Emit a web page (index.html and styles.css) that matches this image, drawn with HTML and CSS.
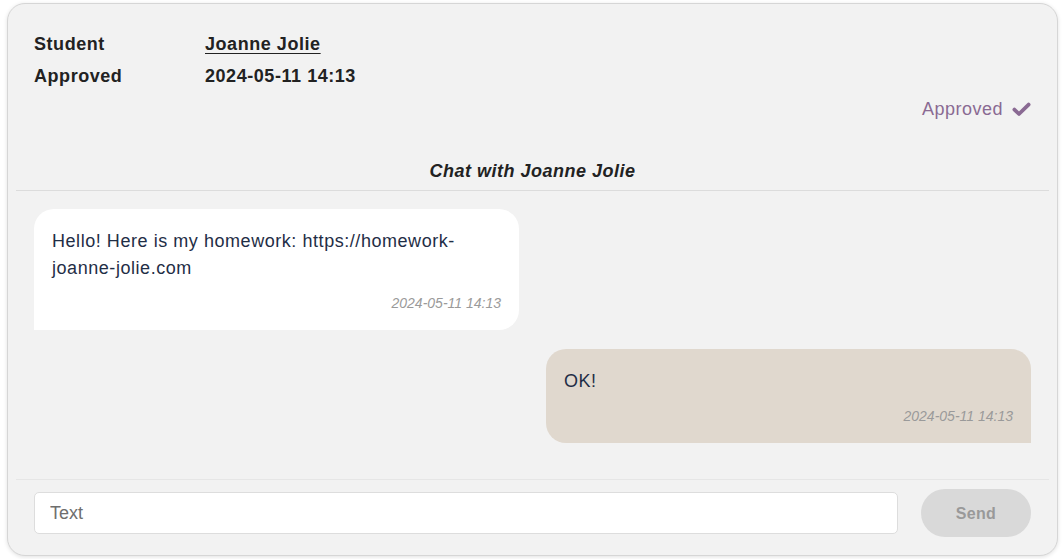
FILE: index.html
```html
<!DOCTYPE html>
<html lang="en">
<head>
<meta charset="utf-8">
<title>Homework chat</title>
<link rel="stylesheet" href="styles.css">
</head>
<body>
<div class="card">
  <section class="info">
    <div class="info-grid">
      <div class="label">Student</div>
      <div class="value"><a class="student-link" href="#">Joanne Jolie</a></div>
      <div class="label">Approved</div>
      <div class="value">2024-05-11 14:13</div>
    </div>
    <div class="status">
      <span>Approved</span>
      <svg class="check" viewBox="0 0 19 15" width="19" height="15" aria-hidden="true">
        <path d="M2.4 7.6 L7 12 L16.6 2.6" fill="none" stroke="currentColor" stroke-width="3.8" stroke-linecap="round" stroke-linejoin="round"/>
      </svg>
    </div>
  </section>
  <h2 class="chat-title">Chat with Joanne Jolie</h2>
  <section class="messages">
    <div class="bubble incoming">
      <p class="msg-text">Hello! Here is my homework: https://homework-joanne-jolie.com</p>
      <div class="msg-time">2024-05-11 14:13</div>
    </div>
    <div class="bubble outgoing">
      <p class="msg-text">OK!</p>
      <div class="msg-time">2024-05-11 14:13</div>
    </div>
  </section>
  <form class="composer" onsubmit="return false">
    <input class="composer-input" type="text" placeholder="Text">
    <button class="send-btn" type="submit" disabled>Send</button>
  </form>
</div>
</body>
</html>
```

FILE: styles.css
```css
* { box-sizing: border-box; }

html, body {
  margin: 0;
  padding: 0;
  background: #ffffff;
}

body {
  font-family: "Liberation Sans", Arial, sans-serif;
  color: #222222;
  padding: 3px 4px 3px 7px;
}

.card {
  background: #f2f2f2;
  border: 1px solid #d6d6d6;
  border-radius: 18px;
  box-shadow: 0 1px 4px rgba(0, 0, 0, 0.12);
  padding: 0 8px;
  height: 553px;
  display: flex;
  flex-direction: column;
}

.info {
  padding: 24px 18px 0;
}

.info-grid {
  display: grid;
  grid-template-columns: 171px auto;
  font-size: 18px;
  font-weight: bold;
  letter-spacing: 0.55px;
  line-height: 32px;
  color: #222222;
}

.student-link {
  color: #222222;
  text-decoration: underline;
  text-underline-offset: 3px;
}

.status {
  margin-top: 4px;
  display: flex;
  justify-content: flex-end;
  align-items: center;
  gap: 9px;
  line-height: 26px;
  font-size: 18px;
  letter-spacing: 0.5px;
  color: #8a6a93;
}

.check {
  display: block;
  color: #8a6a93;
}

.chat-title {
  margin: 28px 0 0;
  padding: 11px 0 9px;
  line-height: 20px;
  font-size: 18px;
  font-weight: bold;
  font-style: italic;
  letter-spacing: 0.5px;
  text-align: center;
  color: #222222;
  border-bottom: 1px solid #dcdcdc;
}

.messages {
  padding: 18px 18px 36px;
  display: flex;
  flex-direction: column;
  gap: 19px;
  border-bottom: 1px solid #e6e6e6;
}

.bubble {
  width: 485px;
  padding: 19px 18px 18px;
  border-radius: 20px;
}

.incoming {
  background: #ffffff;
  border-bottom-left-radius: 0;
  align-self: flex-start;
}

.outgoing {
  background: #e0d8ce;
  border-bottom-right-radius: 0;
  align-self: flex-end;
}

.msg-text {
  margin: 0;
  font-size: 18px;
  line-height: 27px;
  letter-spacing: 0.55px;
  color: #1f2e46;
}

.msg-time {
  margin-top: 12px;
  line-height: 18px;
  font-size: 14px;
  font-style: italic;
  text-align: right;
  color: #9a9a9a;
}

.composer {
  margin: 0;
  padding: 9px 18px 19px;
  display: flex;
  align-items: center;
  gap: 23px;
}

.composer-input {
  flex: 1;
  height: 42px;
  border: 1px solid #dddddd;
  border-radius: 5px;
  background: #ffffff;
  padding: 0 15px;
  font-family: "Liberation Sans", Arial, sans-serif;
  font-size: 18px;
  color: #222222;
  outline: none;
}

.composer-input::placeholder {
  color: #6e6e6e;
}

.send-btn {
  width: 110px;
  height: 48px;
  border: none;
  border-radius: 24px;
  background: #d9d9d9;
  color: #999999;
  padding: 2px 0 0;
  font-family: "Liberation Sans", Arial, sans-serif;
  font-size: 16px;
  font-weight: bold;
  letter-spacing: 0.3px;
}
```
